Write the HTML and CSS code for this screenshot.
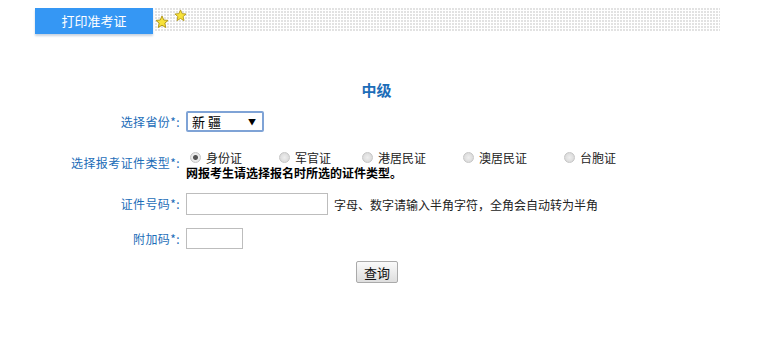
FILE: index.html
```html
<!DOCTYPE html>
<html lang="zh-CN">
<head>
  <meta charset="UTF-8" />
  <title>打印准考证</title>
  <link rel="stylesheet" href="styles.css">
</head>
<body>
  <div class="topbar">
    <div class="tab">打印准考证</div>
    <div class="strip">
      <svg class="star s1" width="14" height="14" viewBox="0 0 14 14"><path d="M7 1 L8.8 5 L13 5.4 L9.8 8.2 L10.8 12.5 L7 10.2 L3.2 12.5 L4.2 8.2 L1 5.4 L5.2 5 Z" fill="#f7e23a" stroke="#b49a1c" stroke-width="1"/></svg>
      <svg class="star s2" width="13" height="13" viewBox="0 0 14 14"><path d="M7 1 L8.8 5 L13 5.4 L9.8 8.2 L10.8 12.5 L7 10.2 L3.2 12.5 L4.2 8.2 L1 5.4 L5.2 5 Z" fill="#f7e23a" stroke="#b49a1c" stroke-width="1"/></svg>
    </div>
  </div>

  <h2 class="level">中级</h2>

  <div class="form">
    <label class="lbl">选择省份*:</label>
    <div class="field first">
      <div class="select"><span>新 疆</span><span class="arrow">▼</span></div>
    </div>

    <label class="lbl lbl-radio">选择报考证件类型*:</label>
    <div class="field">
      <div class="radios">
        <span class="radio on">身份证</span>
        <span class="radio">军官证</span>
        <span class="radio">港居民证</span>
        <span class="radio">澳居民证</span>
        <span class="radio">台胞证</span>
      </div>
      <div class="note">网报考生请选择报名时所选的证件类型。</div>
    </div>

    <label class="lbl">证件号码*:</label>
    <div class="field inline">
      <input class="input id-input" type="text">
      <span class="hint">字母、数字请输入半角字符，全角会自动转为半角</span>
    </div>

    <label class="lbl">附加码*:</label>
    <div class="field">
      <input class="input code-input" type="text">
    </div>
  </div>

  <div class="actions">
    <button class="btn">查询</button>
  </div>
</body>
</html>
```

FILE: styles.css
```css
body {
  margin: 0;
  font-family: "Noto Sans CJK SC", "DejaVu Sans", sans-serif;
  font-size: 12px;
  color: #111;
  background: #fff;
}
.topbar {
  display: flex;
  margin: 8px 0 0 35px;
  width: 685px;
  height: 27px;
}
.tab {
  width: 118px;
  height: 26px;
  background: #3597f4;
  color: #fff;
  font-size: 13px;
  line-height: 26px;
  text-align: center;
  box-shadow: 0 2px 2px #c9d4e0;
}
.strip {
  flex: 1;
  height: 24px;
  margin-left: 2px;
  position: relative;
  background-color: #fff;
  background-image:
    linear-gradient(90deg, transparent 2px, #fff 2px),
    linear-gradient(#e2e2e2 2px, #fff 2px);
  background-size: 3px 3px;
}
.star { position: absolute; }
.s1 { left: 0; top: 7px; }
.s2 { left: 19px; top: 1px; }
.level {
  margin: 36px 0 0;
  text-align: center;
  color: #1c6db8;
  font-size: 15px;
  font-weight: bold;
  padding-right: 8px;
  line-height: 38px;
}
.form {
  display: grid;
  grid-template-columns: 180px 1fr;
  column-gap: 6px;
  row-gap: 13px;
  align-items: start;
  margin-top: 2px;
}
.lbl {
  text-align: right;
  color: #1c6db8;
  line-height: 21px;
  letter-spacing: 0.4px;
}
.lbl-radio { padding-top: 4px; }
.field {
  display: flex;
  flex-direction: column;
  align-items: flex-start;
}
.field.first { margin-bottom: 3px; }
.field.inline { flex-direction: row; align-items: center; }
.select {
  width: 64px;
  height: 17px;
  border: 2px solid #7fa3d6;
  border-radius: 2px;
  display: flex;
  justify-content: space-between;
  align-items: center;
  padding: 0 6px 0 4px;
  font-size: 13px;
  color: #000;
}
.arrow { font-size: 8px; }
.radios {
  display: flex;
  height: 18px;
  align-items: center;
}
.radio {
  display: flex;
  align-items: center;
  color: #222;
}
.radio::before {
  content: "";
  width: 9px;
  height: 9px;
  border-radius: 50%;
  border: 1px solid #c6c6c6;
  background: radial-gradient(circle, #eee, #d4d4d4);
  margin: 0 5px 0 4px;
}
.radio.on::before {
  background: radial-gradient(circle, #555 0 2px, #eee 3px, #dcdcdc);
}
.radio:nth-child(1) { width: 89px; }
.radio:nth-child(2) { width: 83px; }
.radio:nth-child(3) { width: 101px; }
.radio:nth-child(4) { width: 101px; }
.note {
  font-weight: bold;
  color: #000;
  line-height: 14px;
}
.input {
  box-sizing: border-box;
  height: 22px;
  border: 1px solid #bdbdbd;
  margin: 0;
  padding: 0 3px;
}
.id-input { width: 142px; }
.code-input { width: 57px; height: 21px; }
.hint {
  margin-left: 6px;
  color: #222;
}
.actions {
  margin-top: 12px;
  padding-left: 356px;
}
.btn {
  width: 42px;
  height: 22px;
  padding: 0;
  font-family: inherit;
  font-size: 13px;
  border: 1px solid #aaa;
  border-radius: 2px;
  background: linear-gradient(#fafafa, #dedede);
  color: #111;
}
```
